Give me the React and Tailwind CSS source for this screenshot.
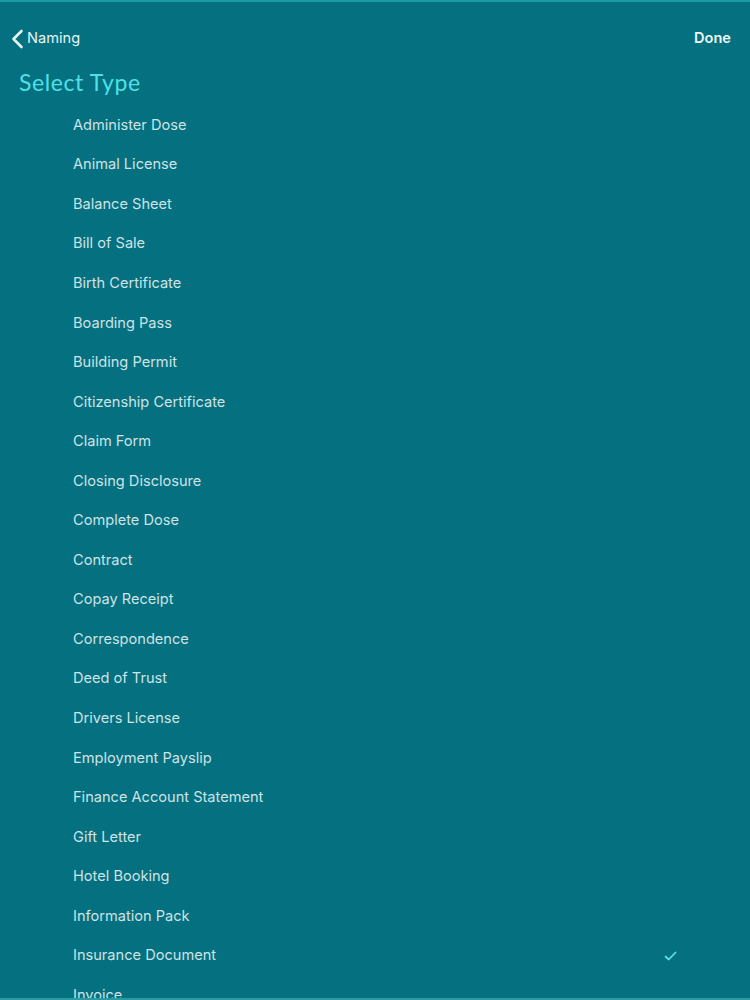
import React from "react";

const types = [
  "Administer Dose",
  "Animal License",
  "Balance Sheet",
  "Bill of Sale",
  "Birth Certificate",
  "Boarding Pass",
  "Building Permit",
  "Citizenship Certificate",
  "Claim Form",
  "Closing Disclosure",
  "Complete Dose",
  "Contract",
  "Copay Receipt",
  "Correspondence",
  "Deed of Trust",
  "Drivers License",
  "Employment Payslip",
  "Finance Account Statement",
  "Gift Letter",
  "Hotel Booking",
  "Information Pack",
  "Insurance Document",
  "Invoice",
  "Lease Agreement",
];

const selected = "Insurance Document";

export default function App() {
  return (
    <div className="relative w-[750px] h-[1000px] overflow-hidden bg-[#05707f] font-['Inter','Open_Sans',sans-serif] border-t-2 border-[#1c9aa6]">
      {/* header */}
      <div className="flex items-center justify-between h-[74px] pl-[11px] pr-[19px]">
        <button className="flex items-center gap-[3px] text-[#e6f4f6] text-[14.6px]">
          <svg width="13" height="20" viewBox="0 0 13 20" fill="none">
            <path d="M10.5 2 L2.5 10 L10.5 18" stroke="#e6f4f6" strokeWidth="2.6" strokeLinecap="round" strokeLinejoin="round" />
          </svg>
          <span>Naming</span>
        </button>
        <button className="text-[#eaf6f8] text-[14.6px] font-semibold">Done</button>
      </div>

      <h1 className="pl-[19px] -mt-[8px] text-[23px] leading-[28px] text-[#4fe0e8] font-['Lato',sans-serif] tracking-[0.6px]">
        Select Type
      </h1>

      <ul className="mt-[10px]">
        {types.map((t) => (
          <li key={t} className="flex items-center justify-between h-[39.55px] pl-[73px] pr-[73px]">
            <span className="text-[14.6px] text-[#cde3e6]">{t}</span>
            {t === selected && (
              <svg width="13" height="10" viewBox="0 0 13 10" fill="none">
                <path d="M1.5 5.5 L4.8 8.5 L11.5 1.5" stroke="#54e0ea" strokeWidth="1.8" strokeLinecap="round" strokeLinejoin="round" />
              </svg>
            )}
          </li>
        ))}
      </ul>

      <div className="absolute left-0 right-0 bottom-0 h-[2px] bg-[#2a9aa0]" />
    </div>
  );
}
